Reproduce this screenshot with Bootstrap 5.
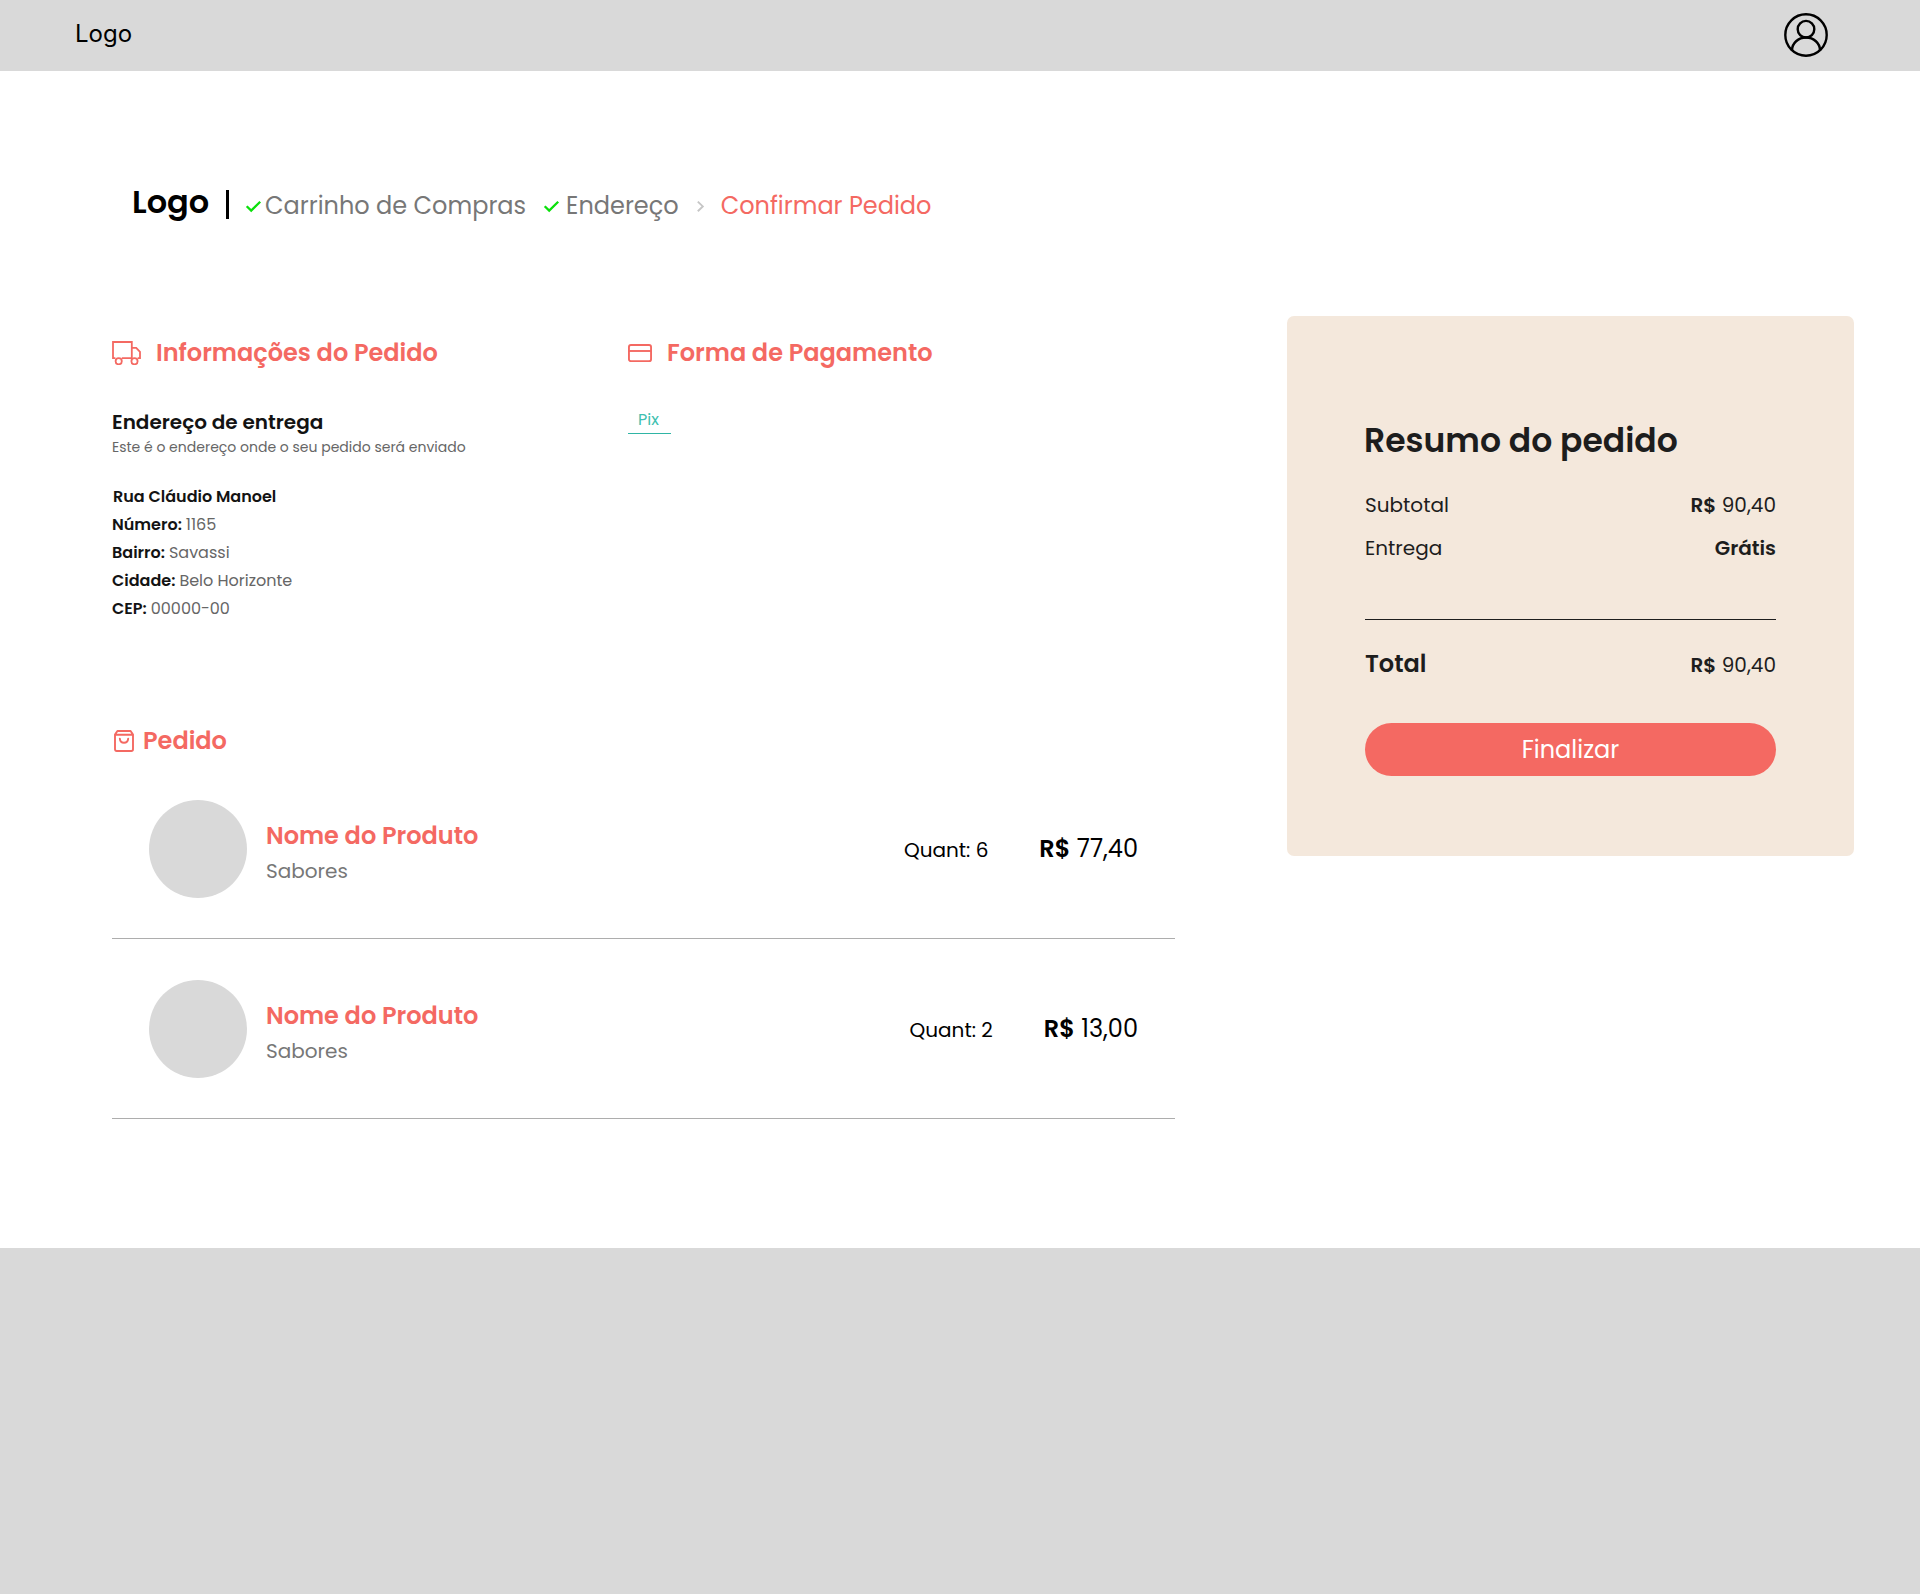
<!DOCTYPE html>
<html lang="pt-BR">
<head>
<meta charset="utf-8">
<meta name="viewport" content="width=device-width, initial-scale=1">
<title>Confirmar Pedido</title>
<link href="https://cdn.jsdelivr.net/npm/bootstrap@5.3.0/dist/css/bootstrap.min.css" rel="stylesheet">
<style>
:root{--coral:#f46962;--ink:#1d1d1d}
body{font-family:Poppins,Inter,sans-serif;color:#000;background:#fff}
svg{display:block;flex:none}
.topbar{height:71px;background:#d9d9d9;padding:0 92px 0 75px}
.topbar-logo{font:400 24px/36px Inter,sans-serif;margin-top:-3px}
.account{margin-top:-1px}
main{height:1177px;padding:116px 66px 0 112px}
h1,h2,h3,p,dl,dd,dt{margin:0}
.crumbs{height:36px;margin-bottom:93px;padding-left:20px;font-size:24px;line-height:38px;color:#777}
.crumb-logo{font-size:32px;line-height:29px;font-weight:600;color:#000;width:94px}
.crumb-bar{width:3px;height:29px;background:#000;margin-top:3px}
.tick{margin:13px 3px 0 16px}
.tick-next{margin:13px 6px 0 17px}
.chevron{margin:13px 16px 0 17px}
.cur{color:var(--coral)}
.left-col{width:1063px;padding-top:19px}
.sec-title{font-size:24px;line-height:36px;font-weight:600;color:var(--coral)}
.sec-icon{margin-right:15px}
.bag-icon{margin-right:7px}
.info-col{width:516px}
.addr-head{font-size:20px;line-height:30px;font-weight:600;color:#131313;margin-top:36px}
.addr-sub{font-size:14px;line-height:21px;color:#666}
.addr{font-size:16px;line-height:28px;color:#666;margin-top:25px}
.addr dt{font-weight:600;color:#131313}
.street{padding-left:1px}
.pix{width:43px;height:29px;line-height:30px;font-size:16px;color:#40bfb0;border-bottom:1px solid #2fb5a5;padding-left:10px;margin-top:34px}
.order-title{margin-top:100px}
.item{height:180px;border-bottom:1px solid #adadad;padding:0 37px}
.thumb{width:98px;height:98px;border-radius:50%;background:#d9d9d9;margin-top:41px}
.item-name{margin:59px 0 0 19px}
.flavor{font-size:20px;line-height:30px;color:#777;margin-top:2px}
.amounts{margin-top:72px;line-height:36px}
.qty{font-size:20px;margin-right:51px}
.price{font-size:24px}
.summary{width:567px;height:540px;background:#f4e8dc;border-radius:7px;padding:101px 78px 0;color:var(--ink);font-size:20px;line-height:30px}
.summary h2{font-size:33px;line-height:48px;font-weight:600;margin:0 0 25px -1px}
.shipping{margin-top:13px}
.rule{height:1px;background:var(--ink);margin:56px 0 26px}
.total-lbl{font-size:24px;line-height:36px;font-weight:600}
.btn-finish{--bs-btn-color:#fff;--bs-btn-bg:var(--coral);--bs-btn-hover-bg:#e95b54;--bs-btn-hover-color:#fff;height:53px;margin-top:41px;padding:1px 0 0;border:0;font-size:24px}
footer{height:346px;background:#d9d9d9}
</style>
</head>
<body>
<header class="topbar d-flex align-items-center justify-content-between">
  <span class="topbar-logo">Logo</span>
  <a class="account" href="#" aria-label="Conta"><svg width="44" height="44" viewBox="0 0 44 44" fill="none" stroke="#000" stroke-width="2.4"><circle cx="22" cy="22" r="20.7"/><circle cx="22" cy="16.2" r="8.3"/><path d="M8 37.5v-.2a14 12.8 0 0 1 28 0v.2"/></svg></a>
</header>
<main>
  <nav class="crumbs d-flex align-items-start" aria-label="Etapas">
    <span class="crumb-logo">Logo</span>
    <span class="crumb-bar"></span>
    <svg class="tick" width="17" height="13" viewBox="0 0 17 13" fill="none" stroke="#0be00b" stroke-width="2.3"><path d="M1.7 6.2 6.2 10.6 15.2 1.8"/></svg>
    <span>Carrinho de Compras</span>
    <svg class="tick-next" width="17" height="13" viewBox="0 0 17 13" fill="none" stroke="#0be00b" stroke-width="2.3"><path d="M1.7 6.2 6.2 10.6 15.2 1.8"/></svg>
    <span>Endereço</span>
    <svg class="chevron" width="9" height="13" viewBox="0 0 9 13" fill="none" stroke="#c6c6c6" stroke-width="1.9"><path d="M1.8 1.6 6.8 6.4 1.8 11.2"/></svg>
    <span class="cur">Confirmar Pedido</span>
  </nav>
  <div class="d-flex justify-content-between align-items-start">
    <div class="left-col">
      <div class="d-flex">
        <section class="info-col">
          <div class="d-flex align-items-center">
            <svg class="sec-icon" width="29" height="24" viewBox="0 0 29 24" fill="none" stroke="#f46962" stroke-width="1.8"><path d="M3.4 17.2H1V1H19.8V17.2H9.8M19.8 6.8H24.2L28 10.8V17.2H25.6M19.8 17.2H20"/><circle cx="6.7" cy="20.2" r="3.1"/><circle cx="22.5" cy="20.2" r="3.1"/></svg>
            <h2 class="sec-title">Informações do Pedido</h2>
          </div>
          <h3 class="addr-head">Endereço de entrega</h3>
          <p class="addr-sub">Este é o endereço onde o seu pedido será enviado</p>
          <dl class="addr">
            <dt class="street">Rua Cláudio Manoel</dt>
            <div class="d-flex gap-1"><dt>Número:</dt><dd>1165</dd></div>
            <div class="d-flex gap-1"><dt>Bairro:</dt><dd>Savassi</dd></div>
            <div class="d-flex gap-1"><dt>Cidade:</dt><dd>Belo Horizonte</dd></div>
            <div class="d-flex gap-1"><dt>CEP:</dt><dd>00000-00</dd></div>
          </dl>
        </section>
        <section>
          <div class="d-flex align-items-center">
            <svg class="sec-icon" width="24" height="20" viewBox="0 0 24 20" fill="none" stroke="#f46962" stroke-width="1.9"><rect x=".95" y="1.95" width="22.1" height="16.2" rx="2"/><path d="M1 8H23"/></svg>
            <h2 class="sec-title">Forma de Pagamento</h2>
          </div>
          <div class="pix">Pix</div>
        </section>
      </div>
      <section>
        <div class="order-title d-flex align-items-center">
          <svg class="bag-icon" width="24" height="24" viewBox="0 0 24 24" fill="none" stroke="#f46962" stroke-width="1.9" stroke-linecap="round" stroke-linejoin="round"><path d="M3 5.6 5.4 2H18.6L21 5.6V20.3Q21 22 19.3 22H4.7Q3 22 3 20.3ZM3 5.8H21M7.8 9.7Q8.2 13.8 12 13.8T16.2 9.7"/></svg>
          <h2 class="sec-title">Pedido</h2>
        </div>
        <div class="item d-flex align-items-start">
          <div class="thumb"></div>
          <div class="item-name"><h3 class="sec-title">Nome do Produto</h3><p class="flavor">Sabores</p></div>
          <div class="amounts d-flex align-items-baseline ms-auto"><span class="qty">Quant: 6</span><span class="price"><b class="fw-semibold">R$</b> 77,40</span></div>
        </div>
        <div class="item d-flex align-items-start">
          <div class="thumb"></div>
          <div class="item-name"><h3 class="sec-title">Nome do Produto</h3><p class="flavor">Sabores</p></div>
          <div class="amounts d-flex align-items-baseline ms-auto"><span class="qty">Quant: 2</span><span class="price"><b class="fw-semibold">R$</b> 13,00</span></div>
        </div>
      </section>
    </div>
    <aside class="summary">
      <h2>Resumo do pedido</h2>
      <div class="d-flex justify-content-between"><span>Subtotal</span><span><b class="fw-semibold">R$</b> 90,40</span></div>
      <div class="shipping d-flex justify-content-between"><span>Entrega</span><b class="fw-semibold">Grátis</b></div>
      <div class="rule"></div>
      <div class="d-flex justify-content-between align-items-baseline"><span class="total-lbl">Total</span><span><b class="fw-semibold">R$</b> 90,40</span></div>
      <button class="btn btn-finish rounded-pill w-100">Finalizar</button>
    </aside>
  </div>
</main>
<footer></footer>
</body>
</html>
